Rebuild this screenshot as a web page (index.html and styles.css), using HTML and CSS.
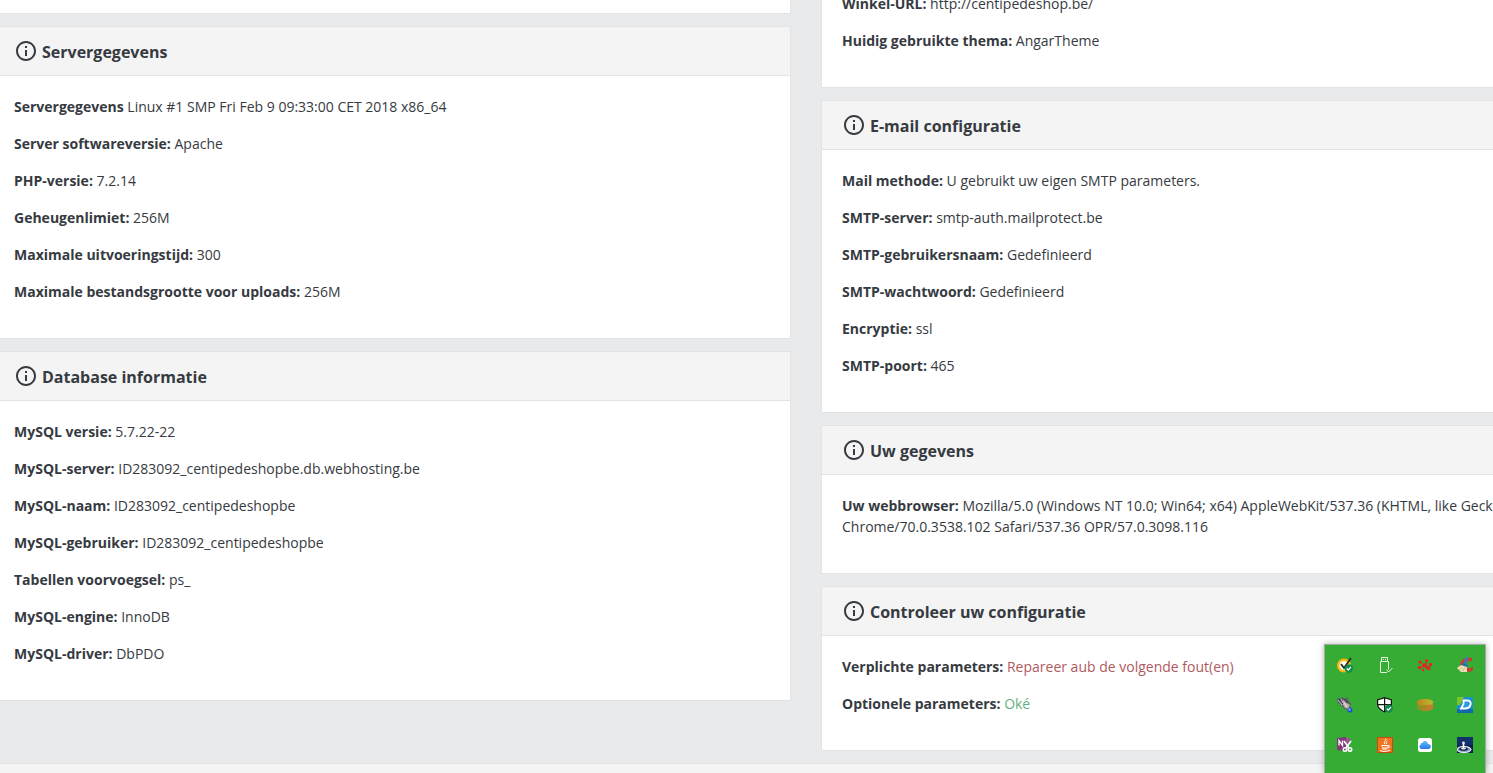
FILE: index.html
```html
<!DOCTYPE html>
<html lang="nl">
<head>
<meta charset="utf-8">
<title>Servergegevens</title>
<link rel="stylesheet" href="styles.css">
</head>
<body>
<svg class="defs" aria-hidden="true">
  <symbol id="info" viewBox="0 0 24 24"><path d="M11 17h2v-6h-2v6zm1-15C6.480 2 2 6.480 2 12s4.480 10 10 10 10-4.480 10-10S17.520 2 12 2zm0 18c-4.410 0-8-3.590-8-8s3.590-8 8-8 8 3.590 8 8-3.590 8-8 8zM11 9h2V7h-2v2z"/></symbol>
</svg>
<main class="columns">
  <div class="column">
    <section class="card card-end"></section>
    <section class="card">
      <h3 class="card-header"><svg class="icon"><use href="#info"/></svg><span class="title">Servergegevens</span></h3>
      <div class="card-body">
        <p><strong>Servergegevens</strong> Linux #1 SMP Fri Feb 9 09:33:00 CET 2018 x86_64</p>
        <p><strong>Server softwareversie:</strong> Apache</p>
        <p><strong>PHP-versie:</strong> 7.2.14</p>
        <p><strong>Geheugenlimiet:</strong> 256M</p>
        <p><strong>Maximale uitvoeringstijd:</strong> 300</p>
        <p><strong>Maximale bestandsgrootte voor uploads:</strong> 256M</p>
      </div>
    </section>
    <section class="card">
      <h3 class="card-header"><svg class="icon"><use href="#info"/></svg><span class="title">Database informatie</span></h3>
      <div class="card-body">
        <p><strong>MySQL versie:</strong> 5.7.22-22</p>
        <p><strong>MySQL-server:</strong> ID283092_centipedeshopbe.db.webhosting.be</p>
        <p><strong>MySQL-naam:</strong> ID283092_centipedeshopbe</p>
        <p><strong>MySQL-gebruiker:</strong> ID283092_centipedeshopbe</p>
        <p><strong>Tabellen voorvoegsel:</strong> ps_</p>
        <p><strong>MySQL-engine:</strong> InnoDB</p>
        <p><strong>MySQL-driver:</strong> DbPDO</p>
      </div>
    </section>
  </div>
  <div class="column">
    <section class="card card-scrolled">
      <div class="card-body">
        <p><strong>Winkel-URL:</strong> http://centipedeshop.be/</p>
        <p><strong>Huidig gebruikte thema:</strong> AngarTheme</p>
      </div>
    </section>
    <section class="card">
      <h3 class="card-header"><svg class="icon"><use href="#info"/></svg><span class="title">E-mail configuratie</span></h3>
      <div class="card-body">
        <p><strong>Mail methode:</strong> U gebruikt uw eigen SMTP parameters.</p>
        <p><strong>SMTP-server:</strong> smtp-auth.mailprotect.be</p>
        <p><strong>SMTP-gebruikersnaam:</strong> Gedefinieerd</p>
        <p><strong>SMTP-wachtwoord:</strong> Gedefinieerd</p>
        <p><strong>Encryptie:</strong> ssl</p>
        <p><strong>SMTP-poort:</strong> 465</p>
      </div>
    </section>
    <section class="card">
      <h3 class="card-header"><svg class="icon"><use href="#info"/></svg><span class="title">Uw gegevens</span></h3>
      <div class="card-body">
        <p><strong>Uw webbrowser:</strong> Mozilla/5.0 (Windows NT 10.0; Win64; x64) AppleWebKit/537.36 (KHTML, like Gecko) Chrome/70.0.3538.102 Safari/537.36 OPR/57.0.3098.116</p>
      </div>
    </section>
    <section class="card">
      <h3 class="card-header"><svg class="icon"><use href="#info"/></svg><span class="title">Controleer uw configuratie</span></h3>
      <div class="card-body">
        <p><strong>Verplichte parameters:</strong> <span class="text-danger">Repareer aub de volgende fout(en)</span></p>
        <p><strong>Optionele parameters:</strong> <span class="text-success">Oké</span></p>
      </div>
    </section>
  </div>
</main>
<footer class="next-card"></footer>

<aside class="tray">
  <button type="button" aria-label="Antivirus">
    <svg viewBox="0 0 16 16"><circle cx="7" cy="8.500" r="5.800" fill="#fff" stroke="#f6b913" stroke-width="2.400"/><path d="M4 7l3 4 7-10" fill="none" stroke="#2c2a18" stroke-width="1.800"/><circle cx="11.800" cy="11.500" r="4.200" fill="#108a4c"/><path d="M9.800 11.500l1.500 1.500 2.600-3" fill="none" stroke="#fff" stroke-width="1.200"/></svg>
  </button>
  <button type="button" aria-label="USB">
    <svg viewBox="0 0 16 16" fill="none" stroke="#e4f5e2"><path d="M4.500 4.500v-4h6v4M3.500 4.500h8v11h-8zM6 2.500h1M8 2.500h1"/><path d="M9 12l2.500 3 4-4" stroke="#37ac34" stroke-width="3"/><path d="M9.500 12.500l2 2.500 4-4"/></svg>
  </button>
  <button type="button" aria-label="Netwerk">
    <svg viewBox="0 0 16 16" fill="#ef2020"><path d="M3 5l5 4 3-6M2 11l6-2 5 1 2-3M8 9l3 4" fill="none" stroke="#b63b22"/><circle cx="7.500" cy="8.500" r="2.300"/><circle cx="3" cy="5" r="1.600"/><circle cx="9.500" cy="3.500" r="1.500"/><circle cx="13.500" cy="7.500" r="1.700"/><circle cx="2.500" cy="10.500" r="1.800"/><circle cx="11.500" cy="11.500" r="1.800"/><circle cx="6" cy="13" r="1.200"/></svg>
  </button>
  <button type="button" aria-label="Opschonen">
    <svg viewBox="0 0 16 16"><path d="M15 4V1C10-1 3 2 3 8s8 9 13 5v-3l-3 1c-3 1-5 0-4-4 1-3 3-3 6-3z" fill="#cf3b2b"/><path d="M10 0L8 7" stroke="#2684c7" stroke-width="2.600"/><path d="M5 6l6 2-1 3-6-3z" fill="#246ca4"/><path d="M4 8l6 2v5l-6 0-4-4z" fill="#efdfb4"/><path d="M3 13l2-3M6 14l2-4" stroke="#d5ba80"/></svg>
  </button>
  <button type="button" aria-label="Stekker">
    <svg viewBox="0 0 16 16"><path d="M0 2l2-1 2 1 1-2 3 2 2-2 1 3 3 4-1 5-4 1-4-4-4-3z" fill="#5f566d"/><path d="M4 5l3-2 3 3 3 2-2 4-3-1z" fill="#b9b2a2"/><path d="M1 3l4 5M4 2l3 5" stroke="#c9c3d4"/><path d="M2 2l4 5M7 2l3 4" stroke="#343044"/><path d="M7 6l3 4" stroke="#eeeadc"/><circle cx="13" cy="13" r="2.600" fill="#1c55cb"/><circle cx="12.500" cy="12.500" r="1.100" fill="#9bc5ff"/></svg>
  </button>
  <button type="button" aria-label="Beveiliging">
    <svg viewBox="0 0 16 16"><path d="M7.500 0L15 2.500V7c0 4-4 7-7.500 8.500C4 14 0 11 0 7V2.500z" fill="#111"/><path d="M7 1.500V7H1.200V3.300zM8.200 1.500L13.800 3.300V7H8.200zM1.300 8.200H7v5.700C4 12.300 1.800 10.500 1.300 8.200zM8.200 8.200h5.500l-5.500 5.700z" fill="#fff"/><circle cx="11.800" cy="11.600" r="4.200" fill="#108a4c"/><path d="M9.800 11.600l1.500 1.500 2.600-3" fill="none" stroke="#fff" stroke-width="1.200"/></svg>
  </button>
  <button type="button" aria-label="Schijf">
    <svg viewBox="0 0 16 16"><defs><linearGradient id="disc"><stop offset="0" stop-color="#7f9a20"/><stop offset="1" stop-color="#d8742a"/></linearGradient><linearGradient id="disc-top"><stop offset="0" stop-color="#c48222"/><stop offset="1" stop-color="#b0bf2a"/></linearGradient></defs><path d="M0 5c0-4 16-4 16 0v6c0 4-16 4-16 0z" fill="url(#disc)"/><path d="M0 5c0-4 16-4 16 0 0 3-4 3-8 3S1 8 0 6z" fill="url(#disc-top)"/></svg>
  </button>
  <button type="button" aria-label="Dienst">
    <svg viewBox="0 0 16 16"><path fill="#1b8fd0" d="M0 0h16v16H0z"/><path fill="#7bc529" d="M0 0h7L3 8H0z"/><path fill="#1068aa" d="M0 12h16v4H0z"/><path d="M6.500 3.500H10c4 0 4.500 3 3 5.500-1 2-3 2.500-5 2.500H4L6.500 7z" fill="#2a9cdc" stroke="#fff" stroke-width="1.800"/></svg>
  </button>
  <button type="button" aria-label="Knippen">
    <svg viewBox="0 0 16 16"><path d="M0 1l9-1v14l-9-1z" fill="#80397b"/><path fill="#9a5796" d="M9 1h4v6H9z"/><path d="M2 8.500v-5l3.500 5v-5" fill="none" stroke="#fff" stroke-width="1.300"/><g fill="none" stroke="#fff" stroke-width="1.600"><path d="M7 4l5 7M14 4l-5 7"/><circle cx="8" cy="12.500" r="1.700"/><circle cx="13" cy="12.500" r="1.700"/></g></svg>
  </button>
  <button type="button" aria-label="Java">
    <svg viewBox="0 0 16 16"><rect width="16" height="16" rx="1" fill="#c9480b"/><rect x="1" y="1" width="14" height="14" fill="#ef7420"/><g fill="none" stroke="#fff"><path d="M8.500 1.500c2 2-3 2.500-.5 5.500M10.500 4c-2 1-1 2-1 3M4.500 8.500h6.500v1c0 2-6 2-6 0M11 8.500c3 0 2 2.500-.5 2.500M5 11.500c1 1 4 1 5 0M3 13.500c2 1.500 8 1 10-.500"/></g></svg>
  </button>
  <button type="button" aria-label="Cloud">
    <svg viewBox="0 0 16 16"><defs><linearGradient id="cloud" x2="0" y2="1"><stop offset="0" stop-color="#62bdfa"/><stop offset="1" stop-color="#2879ea"/></linearGradient></defs><rect x="1" y="1" width="14" height="14" rx="2.500" fill="#fff"/><path d="M4 12a2.500 2.500 0 0 1-.3-4.500C4 6 5 5.800 5.500 6 6.500 3 10.500 3.500 11 7c4 0 3.500 5 .5 5z" fill="url(#cloud)"/></svg>
  </button>
  <button type="button" aria-label="Druppel">
    <svg viewBox="0 0 16 16"><path fill="#12306a" d="M0 0h16v16H0z"/><path fill="#0a1f4c" d="M0 8h16v8H0z"/><ellipse cx="7" cy="12.500" rx="7.500" ry="3.500" fill="#8d9bb8"/><g fill="none" stroke="#eef1f7"><ellipse cx="7" cy="12.500" rx="7" ry="3"/></g><ellipse cx="6.500" cy="12" rx="4.500" ry="1.800" fill="#15264f"/><ellipse cx="6.500" cy="11.500" rx="2.500" ry="1" fill="#dfe5f0"/><path d="M6.500 7v4" stroke="#fff" stroke-width="1.600"/><circle cx="6.500" cy="6" r="1.400" fill="#e7edf8"/></svg>
  </button>
</aside>
</body>
</html>
```
FILE: styles.css
```css
* { box-sizing: border-box; }

body {
  margin: 0;
  height: 100vh;
  overflow: hidden;
  background: #e9eaeb;
  color: #363a41;
  font: 14px/21px "Open Sans", "Noto Sans", sans-serif;
}

.defs { display: none; }

/* The page is wider than the window on both sides. */
.columns {
  display: grid;
  grid-template-columns: 1fr 1fr;
  gap: 30px;
  margin: 0 -126px 0 -7px;
}

.column {
  display: flex;
  flex-direction: column;
  gap: 12px;
}

.card {
  background: #fff;
  border: 1px solid #e2e3e4;
}

.card-end {
  border-top: 0;
  padding-top: 13px;
}

.card-scrolled {
  border-top: 0;
  margin-top: -27px;
}

.card-header {
  display: flex;
  align-items: center;
  gap: 4px;
  height: 49px;
  margin: 0;
  padding: 0 20px;
  background: #f4f4f4;
  border-bottom: 1px solid #e2e3e4;
  font-size: 16px;
  font-weight: 700;
}

.title { padding-top: 2px; }

.icon {
  width: 24px;
  height: 24px;
  fill: #363a41;
}

.card-body { padding: 20px; }

.card-body p { margin: 0 0 16px; }

strong { font-weight: 700; }

.text-danger { color: #b05a60; }

.text-success { color: #65af7e; }

.next-card {
  height: 20px;
  margin-top: 12px;
  background: #f4f4f4;
  border-top: 1px solid #e2e3e4;
}

.tray {
  position: fixed;
  right: 7px;
  bottom: 0;
  display: grid;
  grid-template-columns: repeat(4, 40px);
  padding-bottom: 8px;
  background: #37ac34;
  border: 1px solid #a3aaa3;
  border-bottom: 0;
  box-shadow: 0 0 6px rgba(0, 0, 0, 0.3);
}

.tray button {
  display: grid;
  place-items: center;
  height: 40px;
  padding: 0;
  border: 0;
  background: none;
}

.tray svg {
  width: 16px;
  height: 16px;
}
```
